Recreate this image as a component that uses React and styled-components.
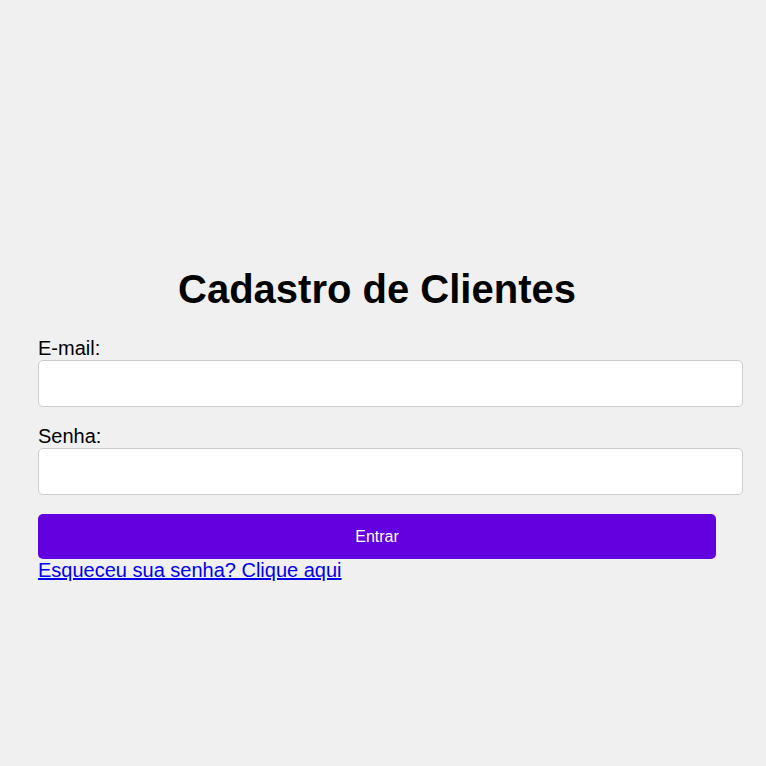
import React from 'react';
import styled, { createGlobalStyle } from 'styled-components';

const GlobalStyle = createGlobalStyle`
  body {
    margin: 0;
    background: #f0f0f0;
    font-family: "Liberation Sans", Arial, sans-serif;
  }
`;

function App() {
  return (
    <>
      <GlobalStyle />
      <Page>
        <Form onSubmit={(e) => e.preventDefault()}>
          <Title>Cadastro de Clientes</Title>
          <Field>
            <Label htmlFor="email">E-mail:</Label>
            <Input id="email" type="email" />
          </Field>
          <Field>
            <Label htmlFor="senha">Senha:</Label>
            <Input id="senha" type="password" />
          </Field>
          <Button type="submit">Entrar</Button>
          <ForgotLink href="#">Esqueceu sua senha? Clique aqui</ForgotLink>
        </Form>
      </Page>
    </>
  );
}

export default App;

const Page = styled.div`
  padding: 266px 50px 0 38px;
`;

const Form = styled.form`
  display: flex;
  flex-direction: column;
  width: 678px;
`;

const Title = styled.h1`
  margin: 0 0 25px;
  font-size: 40px;
  line-height: 46px;
  font-weight: bold;
  text-align: center;
  color: #000;
`;

const Field = styled.div`
  display: flex;
  flex-direction: column;
  margin-bottom: 18px;
`;

const Label = styled.label`
  font-size: 20px;
  line-height: 23px;
  color: #000;
`;

const Input = styled.input`
  box-sizing: border-box;
  width: 705px;
  height: 47px;
  padding: 0 12px;
  border: 1px solid #cccccc;
  border-radius: 5px;
  background: #fff;
  font-size: 16px;
`;

const Button = styled.button`
  margin-top: 1px;
  height: 45px;
  border: none;
  border-radius: 5px;
  background: #6200e0;
  color: #fff;
  font-family: "Liberation Sans", Arial, sans-serif;
  font-size: 16px;
  cursor: pointer;
`;

const ForgotLink = styled.a`
  align-self: flex-start;
  font-size: 20px;
  line-height: 23px;
  color: #0000ee;
`;
